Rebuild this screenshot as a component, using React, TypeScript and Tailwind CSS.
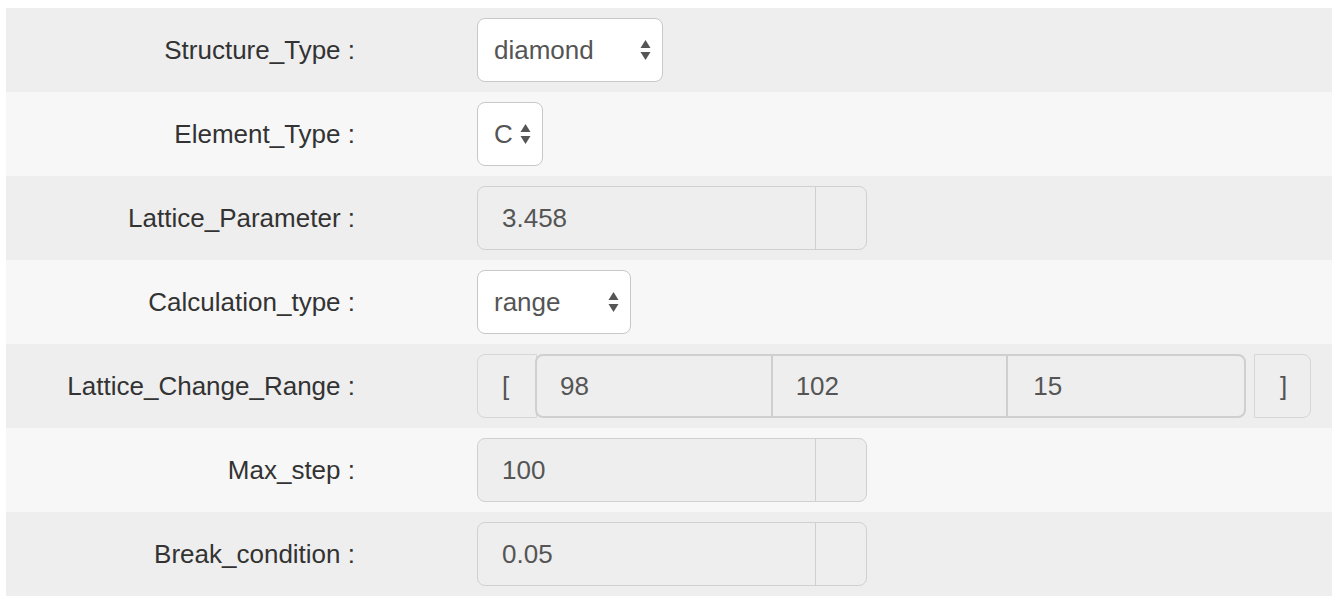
const font = { fontFamily: '"Liberation Sans", Arial, sans-serif' };

function Arrows() {
  return (
    <svg width="11" height="22" viewBox="0 0 11 22" className="shrink-0">
      <path d="M5.5 1 L10.5 9 L0.5 9 Z" fill="#555" />
      <path d="M0.5 13 L10.5 13 L5.5 21 Z" fill="#555" />
    </svg>
  );
}

function Select({ value, width }: { value: string; width: string }) {
  return (
    <div
      className={`flex h-[64px] ${width} items-center justify-between rounded-[8px] border border-[#c8c8c8] bg-white pl-[16px] pr-[11px] text-[26px] text-[#555555]`}
    >
      <span>{value}</span>
      <Arrows />
    </div>
  );
}

function NumberInput({ value }: { value: string }) {
  return (
    <div className="flex h-[64px] w-[390px] rounded-[8px] border border-[#d0d0d0] bg-[#eeeeee]">
      <div className="flex flex-1 items-center border-r border-[#cfcfcf] pl-[24px] text-[26px] text-[#555555]">
        {value}
      </div>
      <div className="w-[50px]" />
    </div>
  );
}

function RangeInput() {
  return (
    <div className="flex h-[64px] items-center">
      <div className="flex h-full w-[60px] items-center rounded-l-[8px] border border-[#d6d6d6] bg-[#eeeeee] pl-[24px] text-[26px] text-[#555555]">
        [
      </div>
      <div className="-ml-[2px] grid h-full w-[711px] grid-cols-3 rounded-[8px] border-2 border-[#cfcfcf] bg-[#eeeeee] text-[26px] text-[#555555]">
        <div className="flex items-center border-r-2 border-[#cfcfcf] pl-[23px]">98</div>
        <div className="flex items-center border-r-2 border-[#cfcfcf] pl-[23px]">102</div>
        <div className="flex items-center pl-[25px]">15</div>
      </div>
      <div className="ml-[8px] flex h-full w-[57px] items-center rounded-r-[8px] border border-[#d6d6d6] bg-[#eeeeee] pl-[25px] text-[26px] text-[#555555]">
        ]
      </div>
    </div>
  );
}

function Row({ label, bg, children }: { label: string; bg: string; children: React.ReactNode }) {
  return (
    <div className={`flex h-[84px] items-center ${bg}`}>
      <div className="w-[349px] text-right text-[26px] text-[#333333]">{label} :</div>
      <div className="ml-[122px] flex items-center">{children}</div>
    </div>
  );
}

export default function App() {
  return (
    <div className="min-h-screen bg-white pl-[6px] pt-[8px]" style={font}>
      <Row label="Structure_Type" bg="bg-[#eeeeee]">
        <Select value="diamond" width="w-[186px]" />
      </Row>
      <Row label="Element_Type" bg="bg-[#f7f7f7]">
        <Select value="C" width="w-[66px]" />
      </Row>
      <Row label="Lattice_Parameter" bg="bg-[#eeeeee]">
        <NumberInput value="3.458" />
      </Row>
      <Row label="Calculation_type" bg="bg-[#f7f7f7]">
        <Select value="range" width="w-[154px]" />
      </Row>
      <Row label="Lattice_Change_Range" bg="bg-[#eeeeee]">
        <RangeInput />
      </Row>
      <Row label="Max_step" bg="bg-[#f7f7f7]">
        <NumberInput value="100" />
      </Row>
      <Row label="Break_condition" bg="bg-[#eeeeee]">
        <NumberInput value="0.05" />
      </Row>
    </div>
  );
}
